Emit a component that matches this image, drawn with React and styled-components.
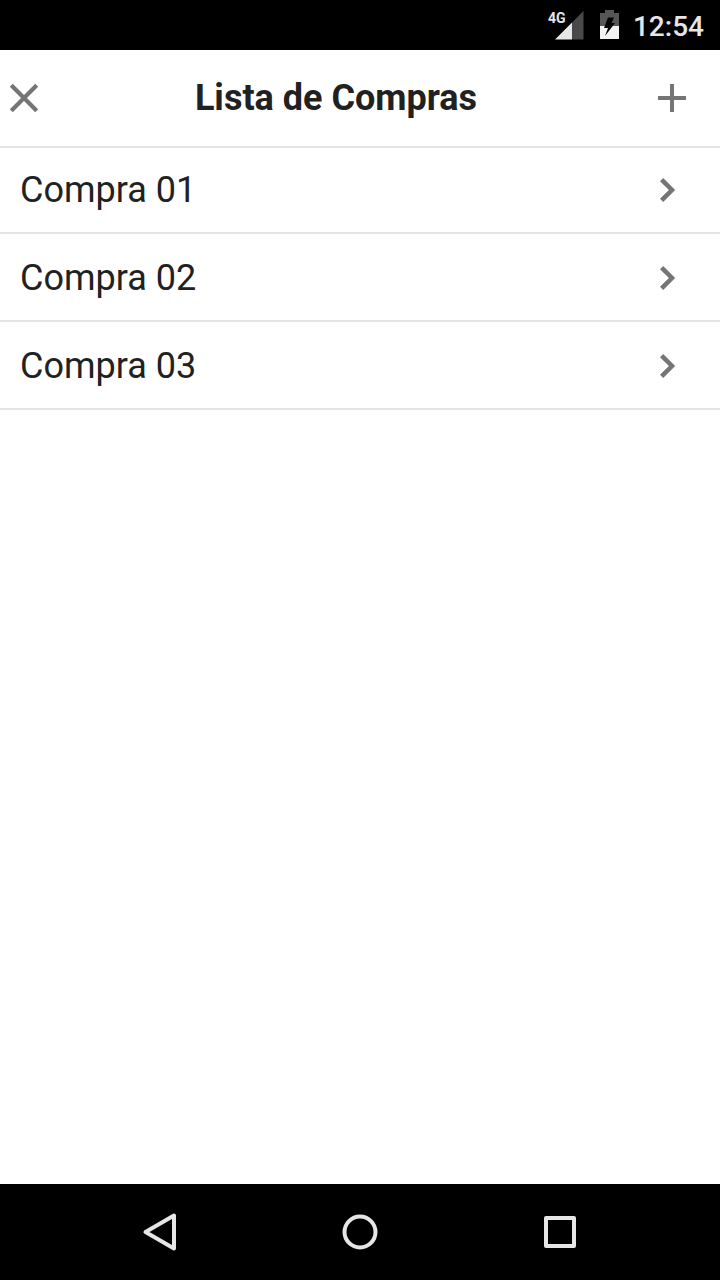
import React from "react";
import styled, { createGlobalStyle } from "styled-components";

const GlobalStyle = createGlobalStyle`
  * { box-sizing: border-box; }
  body {
    margin: 0;
    background: #fff;
    color: #212121;
    font-family: Roboto, "Liberation Sans", sans-serif;
  }
`;

const Screen = styled.div`
  display: flex;
  flex-direction: column;
  min-height: 100vh;
`;

const StatusBar = styled.div`
  display: flex;
  align-items: center;
  justify-content: flex-end;
  gap: 14px;
  height: 50px;
  padding-right: 16px;
  background: #000;
  color: #e6e6e6;
`;

const StatusIcons = styled.div`
  display: flex;
  gap: 16px;
`;

const Signal = styled.div`
  position: relative;
  display: flex;
`;

const NetworkType = styled.span`
  position: absolute;
  top: 0;
  left: -7px;
  font-size: 14px;
  line-height: 16px;
  font-weight: 700;
`;

const Clock = styled.time`
  padding-top: 4px;
  font-size: 28px;
  line-height: 32px;
  font-weight: 500;
`;

const Header = styled.header`
  display: flex;
  align-items: center;
  height: 98px;
  border-bottom: 2px solid #e4e4e4;
`;

const Title = styled.h1`
  flex: 1;
  margin: 0;
  text-align: center;
  font-size: 36px;
  line-height: 44px;
  font-weight: 700;
`;

const IconButton = styled.button`
  display: flex;
  align-items: center;
  justify-content: center;
  width: ${({ $wide }) => ($wide ? "96px" : "48px")};
  height: 96px;
  padding: 0;
  border: 0;
  background: none;
  color: #757575;
  cursor: pointer;
`;

const List = styled.ul`
  flex: 1;
  margin: -2px 0 0;
  padding: 0;
  list-style: none;
`;

const Item = styled.li`
  border-bottom: 2px solid #e4e4e4;
`;

const ItemButton = styled.button`
  display: flex;
  align-items: center;
  justify-content: space-between;
  width: 100%;
  height: 86px;
  padding: 2px 29px 0 20px;
  border: 0;
  background: none;
  color: inherit;
  font-family: inherit;
  font-size: 36px;
  line-height: 44px;
  text-align: left;
  cursor: pointer;

  svg { color: #757575; }
`;

const NavBar = styled.nav`
  display: flex;
  height: 96px;
  padding: 0 60px;
  background: #000;
`;

const NavButton = styled.button`
  display: flex;
  flex: 1;
  align-items: center;
  justify-content: center;
  padding: 0;
  border: 0;
  background: none;
  color: #e6e6e6;
  cursor: pointer;
`;

const StrokeIcon = ({ d, weight = 4, join = "miter" }) => (
  <svg
    width="48"
    height="48"
    viewBox="0 0 48 48"
    fill="none"
    stroke="currentColor"
    strokeWidth={weight}
    strokeLinejoin={join}
    aria-hidden="true"
  >
    <path d={d} />
  </svg>
);

const purchases = ["Compra 01", "Compra 02", "Compra 03"];

export default function App() {
  return (
    <Screen>
      <GlobalStyle />
      <StatusBar>
        <StatusIcons>
          <Signal>
            <NetworkType>4G</NetworkType>
            <svg width="29" height="30" viewBox="0 0 29 30" aria-hidden="true">
              <path d="M28.500 1v28.500H17V12.500z" fill="#494949" />
              <path d="M17 12.500v17H0z" fill="#e6e6e6" />
            </svg>
          </Signal>
          <svg width="19" height="30" viewBox="0 0 19 30" aria-hidden="true">
            <path d="M5 0h9v3h5v13H0V3h5z" fill="#565656" />
            <path d="M0 16h19v13H0z" fill="#f2f2f2" />
            <path d="M8 7.500h6L11.500 13H15L5 26 8 18H4z" fill="#000" />
          </svg>
        </StatusIcons>
        <Clock>12:54</Clock>
      </StatusBar>
      <Header>
        <IconButton aria-label="Fechar">
          <StrokeIcon d="M11.300 11.300 36.700 36.700M36.700 11.300 11.300 36.700" weight={4.2} />
        </IconButton>
        <Title>Lista de Compras</Title>
        <IconButton $wide aria-label="Adicionar">
          <StrokeIcon d="M24 10v28M10 24h28" />
        </IconButton>
      </Header>
      <List>
        {purchases.map((name) => (
          <Item key={name}>
            <ItemButton>
              {name}
              <StrokeIcon d="M18.600 13.600 29 24 18.600 34.400" weight={4.5} />
            </ItemButton>
          </Item>
        ))}
      </List>
      <NavBar>
        <NavButton aria-label="Voltar">
          <StrokeIcon d="M9.500 24 38 7.500v33z" join="round" />
        </NavButton>
        <NavButton aria-label="Início">
          <svg width="48" height="48" viewBox="0 0 48 48" fill="none" stroke="currentColor" strokeWidth="4" aria-hidden="true">
            <circle cx="24" cy="24" r="15.500" />
          </svg>
        </NavButton>
        <NavButton aria-label="Recentes">
          <StrokeIcon d="M10 10h28v28H10z" join="round" />
        </NavButton>
      </NavBar>
    </Screen>
  );
}
